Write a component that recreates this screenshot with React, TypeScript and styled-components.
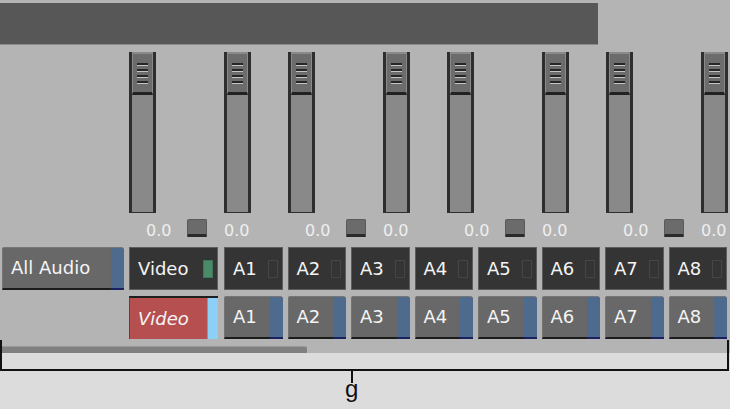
import React from 'react';
import styled, { createGlobalStyle } from 'styled-components';

const GlobalStyle = createGlobalStyle`
  html, body { margin: 0; padding: 0; }
  body {
    width: 730px;
    height: 409px;
    overflow: hidden;
    background: #dcdcdc;
    font-family: "DejaVu Sans", "Open Sans", sans-serif;
  }
`;

const Root = styled.div`
  position: relative;
  width: 730px;
  height: 409px;
`;

const Panel = styled.div`
  display: flex;
  flex-direction: column;
  height: 353px;
  background: #b4b4b4;
  padding-top: 3px;
  box-sizing: border-box;
  border-top: 0;
`;

const Header = styled.div`
  width: 598px;
  height: 41px;
  background: #575757;
  border-bottom: 1px solid #8c8c8c;
`;

const MixerArea = styled.div`
  display: flex;
  justify-content: space-between;
  margin-top: 7px;
  padding-left: 129px;
  padding-right: 2px;
`;

const Group = styled.div`
  display: flex;
  flex-direction: column;
  width: 122px;
`;

const FaderPair = styled.div`
  display: flex;
  justify-content: space-between;
  height: 161px;
`;

const Track = styled.div`
  width: 27px;
  height: 161px;
  box-sizing: border-box;
  background: #898989;
  border-left: 3px solid #2e2e2e;
  border-right: 3px solid #2e2e2e;
  border-bottom: 1px solid #2e2e2e;
  padding-top: 1px;
`;

const Handle = styled.div`
  height: 42px;
  box-sizing: border-box;
  background: #6c6c6c;
  border: 1px solid #8a8a8a;
  border-bottom: 3px solid #222;
  display: flex;
  flex-direction: column;
  align-items: center;
  gap: 3px;
  padding-top: 9px;
`;

const Grip = styled.div`
  width: 11px;
  height: 3px;
  box-sizing: border-box;
  border-top: 2px solid #262626;
  border-bottom: 1px solid #c4c4c4;
`;

const InfoRow = styled.div`
  display: grid;
  grid-template-columns: 17px 41px 20px 17px 27px;
  height: 24px;
`;

const Level = styled.span<{ $col: number }>`
  grid-column: ${(p) => p.$col};
  padding-top: 10px;
  font-size: 16px;
  line-height: 16px;
  color: #efefef;
  white-space: nowrap;
`;

const Mute = styled.div`
  grid-column: 3;
  margin-top: 6px;
  height: 18px;
  box-sizing: border-box;
  background: #6b6b6b;
  border: 1px solid #5a5a5a;
  border-bottom: 3px solid #2b2b2b;
  border-radius: 2px 2px 1px 1px;
`;

const ButtonRow = styled.div<{ $top: number }>`
  display: flex;
  margin-top: ${(p) => p.$top}px;
  padding-left: 2px;
  height: 43px;
`;

const LeftCell = styled.div`
  width: 122px;
  margin-right: 5px;
  flex: none;
  display: flex;
`;

const ChannelGrid = styled.div`
  display: grid;
  grid-template-columns: repeat(8, 1fr);
  column-gap: 5px;
  width: 503px;
  margin-left: 6px;
`;

const Label = styled.span<{ $italic?: boolean }>`
  font-size: 18px;
  line-height: 20px;
  color: #f4f4f4;
  font-style: ${(p) => (p.$italic ? 'italic' : 'normal')};
  white-space: nowrap;
`;

const DarkButton = styled.div<{ $width?: number }>`
  display: flex;
  align-items: center;
  justify-content: space-between;
  box-sizing: border-box;
  width: ${(p) => (p.$width ? `${p.$width}px` : 'auto')};
  height: 43px;
  background: #343434;
  border: 1px solid #5d5d5d;
  padding: 0 4px 0 8px;
`;

const Indicator = styled.div<{ $on?: boolean }>`
  width: 10px;
  height: 18px;
  box-sizing: border-box;
  background: ${(p) => (p.$on ? '#4a8a68' : 'transparent')};
  border: 1px solid ${(p) => (p.$on ? '#3d7558' : '#454545')};
`;

const GrayButton = styled.div<{ $width?: number }>`
  display: flex;
  align-items: stretch;
  box-sizing: border-box;
  width: ${(p) => (p.$width ? `${p.$width}px` : 'auto')};
  height: 43px;
  background: #686868;
  border-top: 1px solid #767676;
  border-left: 1px solid #747474;
  border-bottom: 2px solid #1c1c1c;
  border-radius: 2px 3px 0 0;
`;

const ButtonBody = styled.div`
  flex: 1;
  display: flex;
  align-items: center;
  padding-left: 8px;
`;

const BlueTab = styled.div`
  width: 13px;
  background: #4e6a8d;
  border-radius: 0 3px 0 0;
  box-shadow: inset 0 -2px 0 #1b2160;
  margin-bottom: -2px;
`;

const VideoSelect = styled.div`
  display: flex;
  box-sizing: border-box;
  width: 89px;
  height: 43px;
  border-top: 2px solid #1e1e1e;
  border-left: 1px solid #4a4a4a;
`;

const RedBody = styled.div`
  flex: 1;
  display: flex;
  align-items: center;
  padding-left: 8px;
  background: #b64f4f;
`;

const CyanTab = styled.div`
  width: 10px;
  background: #8dd0f7;
  border-left: 1px solid #6aa0c0;
`;

const Scrollbar = styled.div`
  margin-top: 7px;
  width: 307px;
  height: 7px;
  box-sizing: border-box;
  background: #808080;
  border-top: 1px solid #999;
  border-radius: 0 2px 0 0;
`;

const Bracket = styled.div`
  position: absolute;
  left: 0;
  top: 340px;
  width: 729px;
  height: 31px;
  box-sizing: border-box;
  border: 2px solid #111;
  border-top: none;
`;

const Tick = styled.div`
  position: absolute;
  left: 351px;
  top: 371px;
  width: 2px;
  height: 12px;
  background: #111;
`;

const Caption = styled.div`
  position: absolute;
  left: 345px;
  top: 377px;
  font-family: "Liberation Sans", Arial, sans-serif;
  font-size: 24px;
  line-height: 24px;
  color: #111;
`;

const Fader = () => (
  <Track>
    <Handle>
      <Grip />
      <Grip />
      <Grip />
      <Grip />
    </Handle>
  </Track>
);

const channels = ['A1', 'A2', 'A3', 'A4', 'A5', 'A6', 'A7', 'A8'];

export default function App() {
  return (
    <Root>
      <GlobalStyle />
      <Panel>
        <Header />
        <MixerArea>
          {[0, 1, 2, 3].map((g) => (
            <Group key={g}>
              <FaderPair>
                <Fader />
                <Fader />
              </FaderPair>
              <InfoRow>
                <Level $col={2}>0.0</Level>
                <Mute />
                <Level $col={5}>0.0</Level>
              </InfoRow>
            </Group>
          ))}
        </MixerArea>
        <ButtonRow $top={10}>
          <LeftCell>
            <GrayButton $width={122}>
              <ButtonBody>
                <Label>All Audio</Label>
              </ButtonBody>
              <BlueTab />
            </GrayButton>
          </LeftCell>
          <DarkButton $width={89}>
            <Label>Video</Label>
            <Indicator $on />
          </DarkButton>
          <ChannelGrid>
            {channels.map((c) => (
              <DarkButton key={c}>
                <Label>{c}</Label>
                <Indicator />
              </DarkButton>
            ))}
          </ChannelGrid>
        </ButtonRow>
        <ButtonRow $top={6}>
          <LeftCell />
          <VideoSelect>
            <RedBody>
              <Label $italic>Video</Label>
            </RedBody>
            <CyanTab />
          </VideoSelect>
          <ChannelGrid>
            {channels.map((c) => (
              <GrayButton key={c}>
                <ButtonBody>
                  <Label>{c}</Label>
                </ButtonBody>
                <BlueTab />
              </GrayButton>
            ))}
          </ChannelGrid>
        </ButtonRow>
        <Scrollbar />
      </Panel>
      <Bracket />
      <Tick />
      <Caption>g</Caption>
    </Root>
  );
}
